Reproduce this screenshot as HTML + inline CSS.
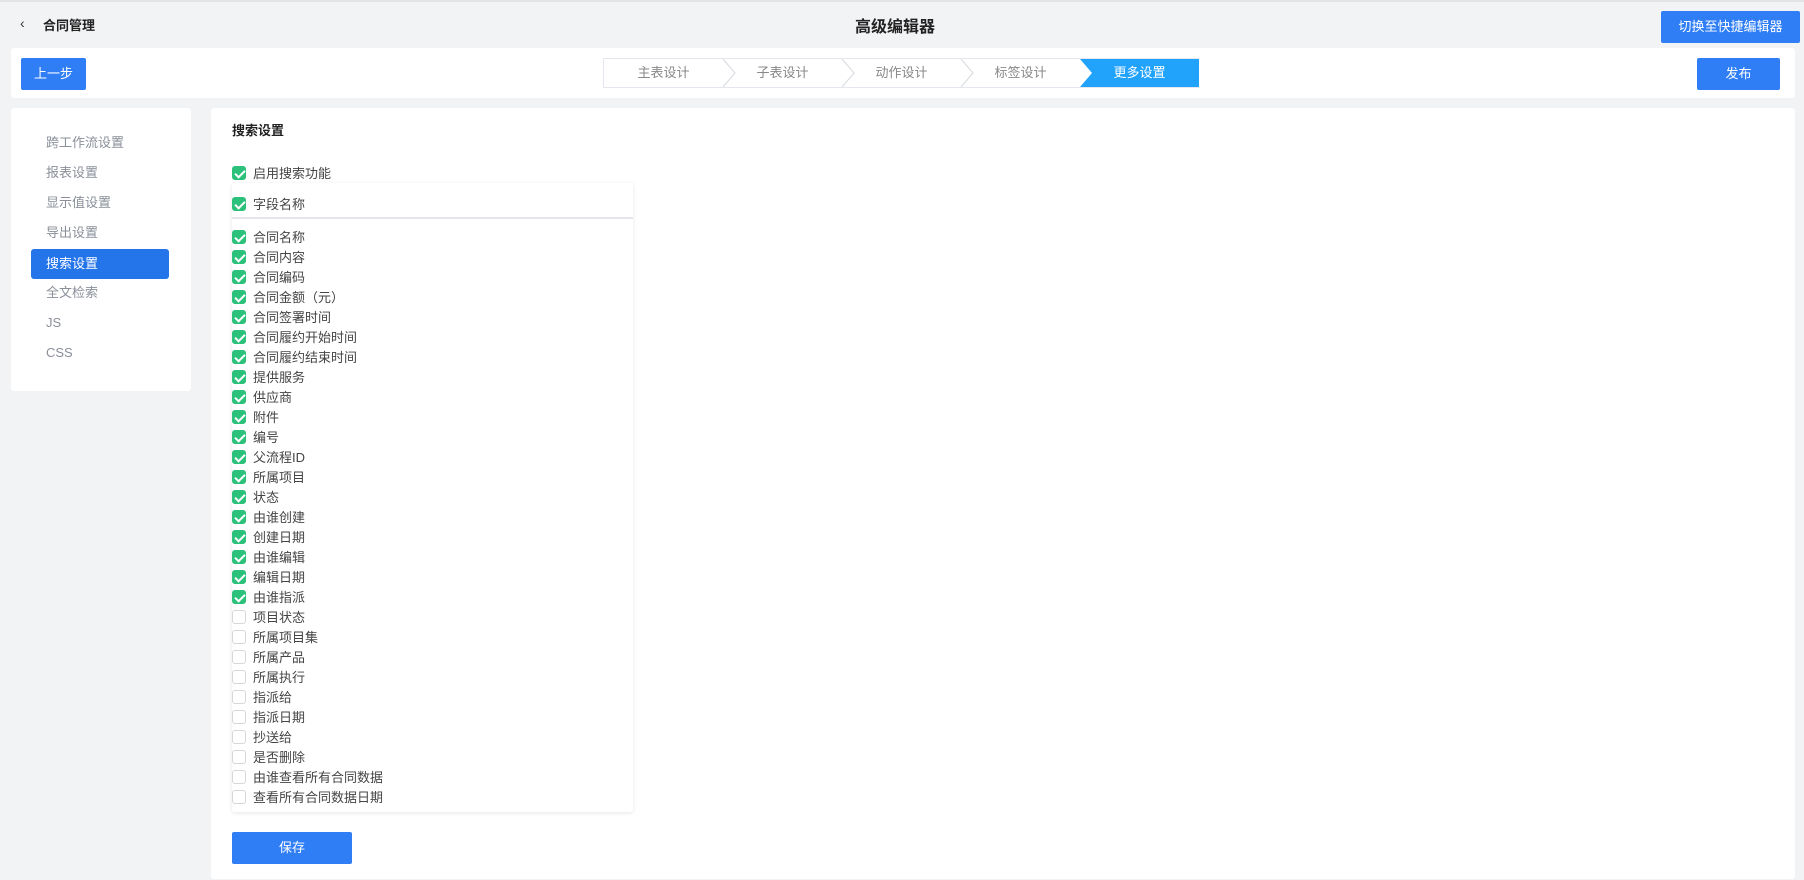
<!DOCTYPE html>
<html><head><meta charset="utf-8"><style>
*{margin:0;padding:0;box-sizing:border-box}
body{width:1804px;height:880px;background:#f2f3f5;font-family:"Liberation Sans","Noto Sans CJK SC",sans-serif;font-size:13px;color:#333;position:relative;overflow:hidden;border-top:2px solid #e3e4e6}
.abs{position:absolute}
.btn{position:absolute;background:#2f7ef6;color:#fff;border-radius:2px;text-align:center;font-size:13px}
.card{position:absolute;background:#fff;border-radius:3px}
.side div{position:absolute;left:15px;width:138px;height:30px;line-height:30px;padding-left:20px;color:#8a8f99;font-size:13px;border-radius:3px}
.side .act{background:#2474ea;color:#fff;padding-left:15px}
.cb{position:absolute;width:14px;height:14px;border-radius:3px;border:1px solid #d5d7db;background:#fff}
.cb.on{background:#2bc17b;border-color:#2bc17b}
.cb.on::after{content:"";position:absolute;left:4px;top:1px;width:4px;height:8px;border:solid #fff;border-width:0 2px 2px 0;transform:rotate(45deg)}
.row{position:absolute;left:232px;height:20px;font-size:13px;color:#444}
.row span{position:absolute;left:21px;top:1px;white-space:nowrap}
.row .cb{left:0;top:4px}
.steps{position:absolute;left:603px;top:56px;height:30px;width:596px;border:1px solid #e4e8ee;background:#fff}
.st{position:absolute;top:0;height:28px;line-height:28px;color:#888;font-size:13px;text-align:center;width:119px}
</style></head><body>
<div class="abs" style="left:20px;top:13px;font-size:14px;color:#333">‹</div>
<div class="abs" style="left:43px;top:13px;font-size:13px;font-weight:bold;color:#222">合同管理</div>
<div class="abs" style="left:855px;top:11px;font-size:16px;font-weight:bold;color:#222">高级编辑器</div>
<div class="btn" style="left:1661px;top:9px;width:139px;height:32px;line-height:32px">切换至快捷编辑器</div>

<div class="card" style="left:11px;top:46px;width:1784px;height:50px"></div>
<div class="btn" style="left:21px;top:56px;width:65px;height:32px;line-height:32px">上一步</div>
<div class="steps">
 <div class="st" style="left:0">主表设计</div>
 <div class="st" style="left:119px">子表设计</div>
 <div class="st" style="left:238px">动作设计</div>
 <div class="st" style="left:357px">标签设计</div>
 <div class="st" style="left:476px;background:#21a2fb;color:#fff;clip-path:polygon(0 0,100% 0,100% 100%,0 100%,12px 50%)">更多设置</div>
 <svg class="abs" style="left:0;top:0" width="596" height="28"><g fill="none" stroke="#d6d9de"><path d="M119 0 L131 14 L119 28"/><path d="M238 0 L250 14 L238 28"/><path d="M357 0 L369 14 L357 28"/></g></svg>
</div>
<div class="btn" style="left:1697px;top:56px;width:83px;height:32px;line-height:32px">发布</div>

<div class="card side" style="left:11px;top:106px;width:180px;height:283px">
 <div style="top:20px">跨工作流设置</div>
 <div style="top:50px">报表设置</div>
 <div style="top:80px">显示值设置</div>
 <div style="top:110px">导出设置</div>
 <div class="act" style="top:141px;left:20px">搜索设置</div>
 <div style="top:170px">全文检索</div>
 <div style="top:200px">JS</div>
 <div style="top:230px">CSS</div>
</div>

<div class="card" style="left:211px;top:106px;width:1584px;height:771px"></div>
<div class="abs" style="left:232px;top:118px;font-size:13px;font-weight:bold;color:#222">搜索设置</div>
<div class="row" style="top:160px"><div class="cb on"></div><span>启用搜索功能</span></div>
<div class="abs" style="left:232px;top:181px;width:401px;height:629px;background:#fff;box-shadow:0 1px 4px rgba(0,0,0,.1);border-radius:2px"></div>
<div class="abs" style="left:232px;top:215px;width:401px;height:2px;background:#e4e6ec"></div>
<div class="row" style="top:191px"><div class="cb on"></div><span>字段名称</span></div>
<div id="list"></div>
<script>
var on=["合同名称","合同内容","合同编码","合同金额（元）","合同签署时间","合同履约开始时间","合同履约结束时间","提供服务","供应商","附件","编号","父流程ID","所属项目","状态","由谁创建","创建日期","由谁编辑","编辑日期","由谁指派"];
var off=["项目状态","所属项目集","所属产品","所属执行","指派给","指派日期","抄送给","是否删除","由谁查看所有合同数据","查看所有合同数据日期"];
var h="";on.concat(off).forEach(function(t,i){h+='<div class="row" style="top:'+(224+i*20)+'px"><div class="cb'+(i<on.length?' on':'')+'"></div><span>'+t+'</span></div>';});
document.getElementById("list").innerHTML=h;
</script>
<div class="btn" style="left:232px;top:830px;width:120px;height:32px;line-height:32px">保存</div>
</body></html>
